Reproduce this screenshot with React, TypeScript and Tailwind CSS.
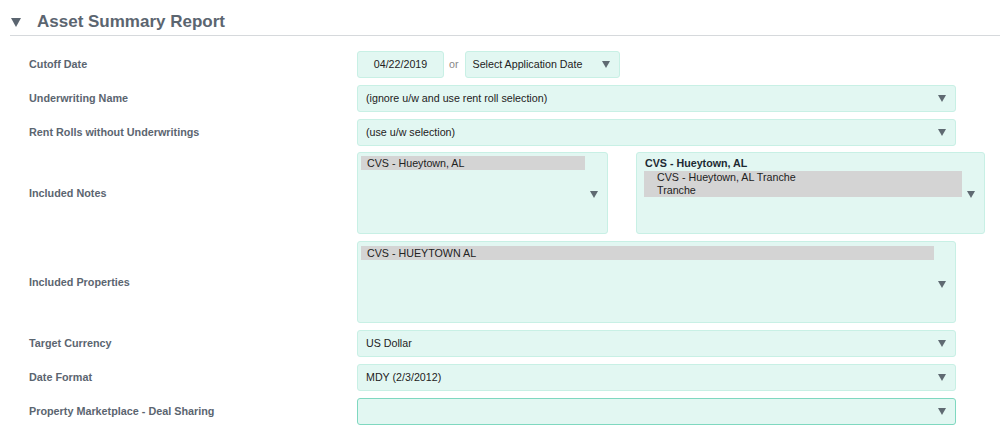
const font = { fontFamily: '"Liberation Sans", Arial, sans-serif' };

const Arrow = ({ className = "" }: { className?: string }) => (
  <svg width="8" height="7" viewBox="0 0 8 7" className={`shrink-0 ${className}`}>
    <path d="M0 0 H8 L4 7 Z" fill="#5f6a72" />
  </svg>
);

const Row = ({ label, children, tall = false }: { label: string; children: React.ReactNode; tall?: boolean }) => (
  <div className={`flex items-center ${tall ? "h-[82px]" : "h-[27px]"}`}>
    <div className="w-[328px] shrink-0 text-[10.8px] font-bold text-[#5b6570]">{label}</div>
    {children}
  </div>
);

const Select = ({ value, focused = false }: { value?: string; focused?: boolean }) => (
  <div
    className={`flex h-[27px] w-[599px] items-center justify-between rounded-[3px] border bg-[#e2f7f2] pl-[8px] pr-[9px] text-[10.7px] text-[#222] ${
      focused ? "border-[#7fd8c0]" : "border-[#c8f0e5]"
    }`}
  >
    <span>{value}</span>
    <Arrow />
  </div>
);

export default function App() {
  return (
    <div className="min-h-[444px] w-[1000px] bg-white pl-[10px]" style={font}>
      {/* Header */}
      <div className="flex h-[36px] items-center border-b border-[#d6d9dc] pt-[9px]">
        <svg width="10" height="9" viewBox="0 0 10 9" className="ml-[1px]">
          <path d="M0 0 H10 L5 9 Z" fill="#5b6570" />
        </svg>
        <h1 className="ml-[16px] text-[17px] font-bold text-[#5b6570]">Asset Summary Report</h1>
      </div>

      <div className="flex flex-col gap-[6.8px] pl-[19px] pt-[15px]">
        <Row label="Cutoff Date">
          <div className="flex h-[27px] w-[87px] items-center justify-center rounded-[3px] border border-[#c8f0e5] bg-[#e2f7f2] text-[10.7px] text-[#222]">
            04/22/2019
          </div>
          <span className="ml-[5px] mr-[6px] text-[10.7px] text-[#888]">or</span>
          <div className="flex h-[27px] w-[155px] items-center justify-between rounded-[3px] border border-[#c8f0e5] bg-[#e2f7f2] pl-[7px] pr-[9px] text-[10.7px] text-[#222]">
            <span>Select Application Date</span>
            <Arrow />
          </div>
        </Row>

        <Row label="Underwriting Name">
          <Select value="(ignore u/w and use rent roll selection)" />
        </Row>

        <Row label="Rent Rolls without Underwritings">
          <Select value="(use u/w selection)" />
        </Row>

        <Row label="Included Notes" tall>
          <div className="flex h-[82px] w-[251px] items-start rounded-[3px] border border-[#c8f0e5] bg-[#e2f7f2] pl-[3px] pr-[9px] pt-[3px] text-[10.7px] text-[#222]">
            <div className="w-[224px] bg-[#d4d4d4] pl-[6px] leading-[14px]">CVS - Hueytown, AL</div>
            <Arrow className="ml-auto self-center" />
          </div>
          <div className="ml-[28px] flex h-[82px] w-[349px] items-start rounded-[3px] border border-[#c8f0e5] bg-[#e2f7f2] pl-[7px] pr-[9px] pt-[3px] text-[10.7px] text-[#222]">
            <div className="w-[318px]">
              <div className="pl-[1px] font-bold leading-[15px] text-[#1d2a33]">CVS - Hueytown, AL</div>
              <div className="bg-[#d4d4d4] pl-[13px] leading-[13px]">
                CVS - Hueytown, AL Tranche
                <br />
                Tranche
              </div>
            </div>
            <Arrow className="ml-auto self-center" />
          </div>
        </Row>

        <Row label="Included Properties" tall>
          <div className="flex h-[82px] w-[599px] items-start rounded-[3px] border border-[#c8f0e5] bg-[#e2f7f2] pl-[3px] pr-[9px] pt-[4px] text-[10.7px] text-[#222]">
            <div className="w-[573px] bg-[#d4d4d4] pl-[6px] leading-[14px]">CVS - HUEYTOWN AL</div>
            <Arrow className="ml-auto self-center" />
          </div>
        </Row>

        <Row label="Target Currency">
          <Select value="US Dollar" />
        </Row>

        <Row label="Date Format">
          <Select value="MDY (2/3/2012)" />
        </Row>

        <Row label="Property Marketplace - Deal Sharing">
          <Select focused />
        </Row>
      </div>
    </div>
  );
}
